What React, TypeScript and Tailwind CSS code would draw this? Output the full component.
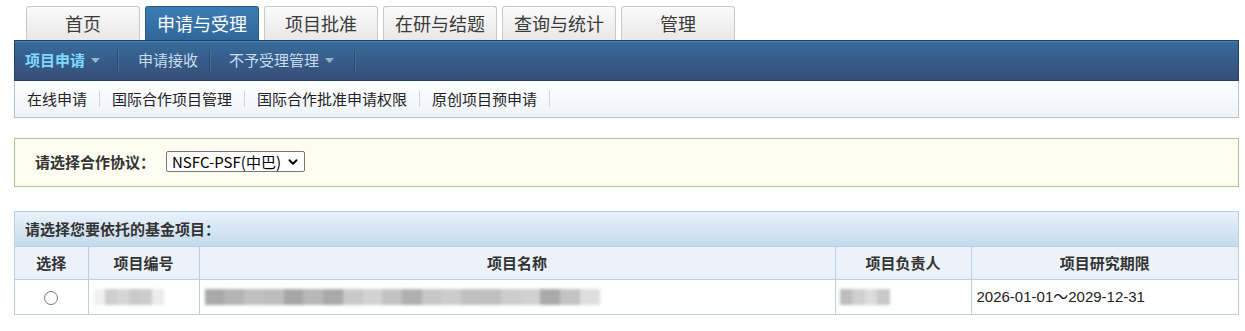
import { ChevronDown } from "lucide-react";

const tabs = ["首页", "申请与受理", "项目批准", "在研与结题", "查询与统计", "管理"];
const subLinks = ["在线申请", "国际合作项目管理", "国际合作批准申请权限", "原创项目预申请"];

const cjk = "font-['Microsoft_YaHei','Noto_Sans_CJK_SC',sans-serif]";

function Caret({ className }: { className: string }) {
  return (
    <svg width="9" height="5" viewBox="0 0 9 5" className={className}>
      <path d="M0 0h9L4.5 5z" fill="currentColor" />
    </svg>
  );
}

// stand-in for the pixelated (masked) cells of the screenshot
function Masked({ width, shades }: { width: number; shades: string[] }) {
  return (
    <div className="flex h-[16px] blur-[1.5px]" style={{ width }}>
      {shades.map((c, i) => (
        <div key={i} className="h-full flex-1" style={{ background: c }} />
      ))}
    </div>
  );
}

export default function App() {
  return (
    <div className={`min-h-[331px] bg-white pl-[14px] pr-[6px] pt-[6px] text-[15px] text-[#333] ${cjk}`}>
      {/* Top tabs */}
      <div className="flex gap-[5px] pl-[12px]">
        {tabs.map((t, i) =>
          i === 1 ? (
            <div
              key={t}
              className="flex h-[34px] w-[114px] items-center justify-center rounded-t-[3px] border border-b-0 border-[#2a5a88] bg-gradient-to-b from-[#3d7db3] to-[#2f679c] text-[18px] text-white"
            >
              {t}
            </div>
          ) : (
            <div
              key={t}
              className="flex h-[34px] w-[114px] items-center justify-center rounded-t-[3px] border border-b-0 border-[#c9c9c9] bg-gradient-to-b from-[#fafafa] to-[#e9e9e9] text-[18px] text-[#3a3a3a]"
            >
              {t}
            </div>
          )
        )}
      </div>

      {/* Blue menu bar */}
      <div className="flex h-[41px] items-center border border-[#223f63] bg-gradient-to-b from-[#356c9c] to-[#364e77] shadow-[inset_0_1px_0_#4a7fae]">
        <div className="flex items-center gap-[6px] pl-[10px] pr-[17px] font-bold text-[#7fd9ff]">
          项目申请
          <Caret className="text-[#9cb4cc]" />
        </div>
        <div className="h-[22px] w-[2px] border-l border-r border-l-[#2a4a72] border-r-[#4a6d96]" />
        <div className="pl-[19px] pr-[11px] text-[#c9dcef]">申请接收</div>
        <div className="h-[22px] w-[2px] border-l border-r border-l-[#2a4a72] border-r-[#4a6d96]" />
        <div className="flex items-center gap-[6px] pl-[18px] pr-[20px] text-[#c9dcef]">
          不予受理管理
          <Caret className="text-[#9cb4cc]" />
        </div>
        <div className="h-[22px] w-[2px] border-l border-r border-l-[#2a4a72] border-r-[#4a6d96]" />
      </div>

      {/* Sub links */}
      <div className="flex h-[37px] items-center border border-t-0 border-[#b9c2cc] bg-gradient-to-b from-white to-[#eef3f8] pl-[12px] text-[#222]">
        {subLinks.map((l) => (
          <div key={l} className="flex items-center">
            <span>{l}</span>
            <span className="mx-[12px] h-[16px] w-px bg-[#d2d2d2]" />
          </div>
        ))}
      </div>

      {/* Agreement chooser */}
      <div className="mt-[20px] flex h-[49px] items-center border border-[#a8c88a] bg-[#fdfdf2] pl-[20px]">
        <span className="font-bold text-[#333]">请选择合作协议：</span>
        <div className="relative ml-[11px]">
          <select className="h-[21px] w-[139px] appearance-none rounded-[2px] border border-[#767676] bg-white pl-[5px] text-[15px] leading-[19px] text-black outline-none">
            <option>NSFC-PSF(中巴)</option>
          </select>
          <ChevronDown
            size={14}
            strokeWidth={3.2}
            className="pointer-events-none absolute right-[5px] top-[4px] text-black"
          />
        </div>
      </div>

      {/* Fund project table */}
      <div className="mt-[24px] border border-[#bcd0e2]">
        <div className="flex h-[34px] items-center bg-gradient-to-b from-[#e9f2fa] to-[#c4daec] pl-[10px] font-bold text-[#333]">
          请选择您要依托的基金项目：
        </div>
        <table className="w-full border-collapse">
          <thead>
            <tr className="h-[33px] bg-[#ebf2f9] font-bold">
              <th className="w-[73px] border-t border-r border-[#bcd0e2] font-bold">选择</th>
              <th className="w-[111px] border-t border-r border-[#bcd0e2] font-bold">项目编号</th>
              <th className="w-[636px] border-t border-r border-[#bcd0e2] font-bold">项目名称</th>
              <th className="w-[136px] border-t border-r border-[#bcd0e2] font-bold">项目负责人</th>
              <th className="border-t border-[#bcd0e2] font-bold">项目研究期限</th>
            </tr>
          </thead>
          <tbody>
            <tr className="h-[34px]">
              <td className="border-t border-r border-[#bcd0e2] text-center">
                <input type="radio" name="fund" className="h-[14px] w-[14px] align-middle" />
              </td>
              <td className="border-t border-r border-[#bcd0e2] pl-[5px]">
                <Masked width={70} shades={["#f0f0f0", "#cfcfcf", "#d6d6d6", "#c9c9c9", "#cccccc", "#ececec"]} />
              </td>
              <td className="border-t border-r border-[#bcd0e2] pl-[5px]">
                <Masked
                  width={395}
                  shades={[
                    "#a9a9a9", "#b4b4b4", "#c0c0c0", "#bdbdbd", "#a6a6a6", "#b8b8b8", "#a9a9a9", "#c9c9c9",
                    "#d2d2d2", "#c2c2c2", "#b0b0b0", "#c7c7c7", "#cccccc", "#c1c1c1", "#bfbfbf", "#cdcdcd",
                    "#d1d1d1", "#aaaaaa", "#c3c3c3", "#dedede",
                  ]}
                />
              </td>
              <td className="border-t border-r border-[#bcd0e2] pl-[4px]">
                <Masked width={50} shades={["#bdbdbd", "#cfcfcf", "#dcdcdc", "#c8c8c8"]} />
              </td>
              <td className="border-t border-[#bcd0e2] pl-[5px] font-['Liberation_Sans','Noto_Sans_CJK_SC',sans-serif] text-[#222]">
                2026-01-01～2029-12-31
              </td>
            </tr>
          </tbody>
        </table>
      </div>
    </div>
  );
}
